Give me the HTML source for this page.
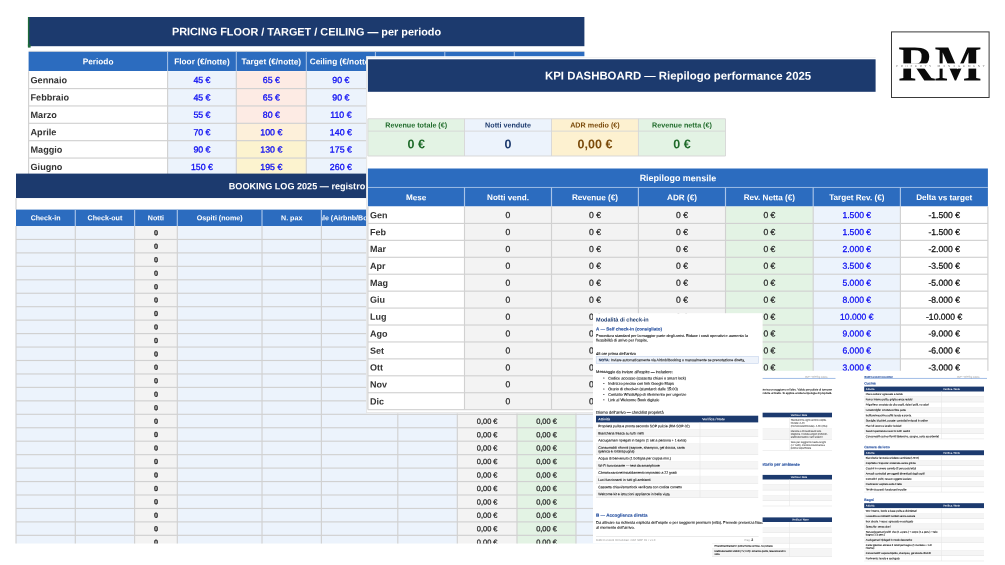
<!DOCTYPE html>
<html lang="it"><head><meta charset="utf-8"><title>R&amp;M Property Management</title>
<style>
html,body{margin:0;padding:0;background:#fff;}
body{width:1005px;height:565px;overflow:hidden;position:relative;}
svg{position:absolute;left:0;top:0;display:block;will-change:transform;filter:blur(0.3px);font-family:"Liberation Sans",sans-serif;}
svg text{white-space:pre;}
.sf{font-family:"Liberation Serif",serif;}
</style></head><body>
<svg width="1005" height="565" viewBox="0 0 1005 565">
<rect x="0" y="0" width="1005" height="565" fill="#fff"/>
<g id="pricing">
<rect x="28.6" y="17" width="555.8" height="29.2" fill="#1c3a6e"/>
<text transform="translate(306.5,35.42) rotate(0.03)" font-size="10.88" text-anchor="middle" font-weight="bold" fill="#fff">PRICING FLOOR / TARGET / CEILING — per periodo</text>
<rect x="27.9" y="17" width="1.4" height="29.4" fill="#1e6b3a"/>
<rect x="27.9" y="44.4" width="2.7" height="3.2" fill="#1e6b3a"/>
<rect x="28.6" y="50.9" width="555.8" height="0.8" fill="#d1d1d1"/>
<rect x="28.6" y="51.8" width="555.8" height="19.2" fill="#2c6cbf"/>
<text transform="translate(98.1,64.37) rotate(0.03)" font-size="8.25" text-anchor="middle" font-weight="bold" fill="#fff">Periodo</text>
<rect x="167.1" y="51.8" width="1" height="19.2" fill="#a9c4e8"/>
<text transform="translate(201.95,64.37) rotate(0.03)" font-size="8.25" text-anchor="middle" font-weight="bold" fill="#fff">Floor (€/notte)</text>
<rect x="235.8" y="51.8" width="1" height="19.2" fill="#a9c4e8"/>
<text transform="translate(271.3,64.37) rotate(0.03)" font-size="8.25" text-anchor="middle" font-weight="bold" fill="#fff">Target (€/notte)</text>
<rect x="305.8" y="51.8" width="1" height="19.2" fill="#a9c4e8"/>
<text transform="translate(340.85,64.37) rotate(0.03)" font-size="8.25" text-anchor="middle" font-weight="bold" fill="#fff">Ceiling (€/notte)</text>
<rect x="374.9" y="51.8" width="1" height="19.2" fill="#a9c4e8"/>
<text transform="translate(410.1,64.37) rotate(0.03)" font-size="8.25" text-anchor="middle" font-weight="bold" fill="#fff">Note</text>
<rect x="444.3" y="51.8" width="1" height="19.2" fill="#a9c4e8"/>
<rect x="513.8" y="51.8" width="1" height="19.2" fill="#a9c4e8"/>
<rect x="167.6" y="71.2" width="68.7" height="104.22" fill="#ecf3fc"/>
<rect x="306.3" y="71.2" width="69.1" height="104.22" fill="#ecf3fc"/>
<rect x="236.3" y="71.2" width="70" height="17.37" fill="#fdebe4"/>
<rect x="236.3" y="88.57" width="70" height="17.37" fill="#fdebe4"/>
<rect x="236.3" y="105.94" width="70" height="17.37" fill="#fdebe4"/>
<rect x="236.3" y="123.31" width="70" height="17.37" fill="#fdf0da"/>
<rect x="236.3" y="140.68" width="70" height="17.37" fill="#fcf3cf"/>
<rect x="236.3" y="158.05" width="70" height="17.37" fill="#fcf3cf"/>
<rect x="28.6" y="88" width="346.8" height="1.15" fill="#d1d1d1"/>
<text transform="translate(30.5,83.18) rotate(0.03)" font-size="9.15" font-weight="bold" fill="#333">Gennaio</text>
<text transform="translate(201.95,83.05) rotate(0.03)" font-size="8.8" text-anchor="middle" fill="#0c0cf2" stroke="#0c0cf2" stroke-width="0.3">45 €</text>
<text transform="translate(271.3,83.05) rotate(0.03)" font-size="8.8" text-anchor="middle" fill="#0c0cf2" stroke="#0c0cf2" stroke-width="0.3">65 €</text>
<text transform="translate(340.85,83.05) rotate(0.03)" font-size="8.8" text-anchor="middle" fill="#0c0cf2" stroke="#0c0cf2" stroke-width="0.3">90 €</text>
<rect x="28.6" y="105.37" width="346.8" height="1.15" fill="#d1d1d1"/>
<text transform="translate(30.5,100.55) rotate(0.03)" font-size="9.15" font-weight="bold" fill="#333">Febbraio</text>
<text transform="translate(201.95,100.42) rotate(0.03)" font-size="8.8" text-anchor="middle" fill="#0c0cf2" stroke="#0c0cf2" stroke-width="0.3">45 €</text>
<text transform="translate(271.3,100.42) rotate(0.03)" font-size="8.8" text-anchor="middle" fill="#0c0cf2" stroke="#0c0cf2" stroke-width="0.3">65 €</text>
<text transform="translate(340.85,100.42) rotate(0.03)" font-size="8.8" text-anchor="middle" fill="#0c0cf2" stroke="#0c0cf2" stroke-width="0.3">90 €</text>
<rect x="28.6" y="122.73" width="346.8" height="1.15" fill="#d1d1d1"/>
<text transform="translate(30.5,117.92) rotate(0.03)" font-size="9.15" font-weight="bold" fill="#333">Marzo</text>
<text transform="translate(201.95,117.79) rotate(0.03)" font-size="8.8" text-anchor="middle" fill="#0c0cf2" stroke="#0c0cf2" stroke-width="0.3">55 €</text>
<text transform="translate(271.3,117.79) rotate(0.03)" font-size="8.8" text-anchor="middle" fill="#0c0cf2" stroke="#0c0cf2" stroke-width="0.3">80 €</text>
<text transform="translate(340.85,117.79) rotate(0.03)" font-size="8.8" text-anchor="middle" fill="#0c0cf2" stroke="#0c0cf2" stroke-width="0.3">110 €</text>
<rect x="28.6" y="140.11" width="346.8" height="1.15" fill="#d1d1d1"/>
<text transform="translate(30.5,135.29) rotate(0.03)" font-size="9.15" font-weight="bold" fill="#333">Aprile</text>
<text transform="translate(201.95,135.16) rotate(0.03)" font-size="8.8" text-anchor="middle" fill="#0c0cf2" stroke="#0c0cf2" stroke-width="0.3">70 €</text>
<text transform="translate(271.3,135.16) rotate(0.03)" font-size="8.8" text-anchor="middle" fill="#0c0cf2" stroke="#0c0cf2" stroke-width="0.3">100 €</text>
<text transform="translate(340.85,135.16) rotate(0.03)" font-size="8.8" text-anchor="middle" fill="#0c0cf2" stroke="#0c0cf2" stroke-width="0.3">140 €</text>
<rect x="28.6" y="157.48" width="346.8" height="1.15" fill="#d1d1d1"/>
<text transform="translate(30.5,152.66) rotate(0.03)" font-size="9.15" font-weight="bold" fill="#333">Maggio</text>
<text transform="translate(201.95,152.53) rotate(0.03)" font-size="8.8" text-anchor="middle" fill="#0c0cf2" stroke="#0c0cf2" stroke-width="0.3">90 €</text>
<text transform="translate(271.3,152.53) rotate(0.03)" font-size="8.8" text-anchor="middle" fill="#0c0cf2" stroke="#0c0cf2" stroke-width="0.3">130 €</text>
<text transform="translate(340.85,152.53) rotate(0.03)" font-size="8.8" text-anchor="middle" fill="#0c0cf2" stroke="#0c0cf2" stroke-width="0.3">175 €</text>
<rect x="28.6" y="174.85" width="346.8" height="1.15" fill="#d1d1d1"/>
<text transform="translate(30.5,170.03) rotate(0.03)" font-size="9.15" font-weight="bold" fill="#333">Giugno</text>
<text transform="translate(201.95,169.9) rotate(0.03)" font-size="8.8" text-anchor="middle" fill="#0c0cf2" stroke="#0c0cf2" stroke-width="0.3">150 €</text>
<text transform="translate(271.3,169.9) rotate(0.03)" font-size="8.8" text-anchor="middle" fill="#0c0cf2" stroke="#0c0cf2" stroke-width="0.3">195 €</text>
<text transform="translate(340.85,169.9) rotate(0.03)" font-size="8.8" text-anchor="middle" fill="#0c0cf2" stroke="#0c0cf2" stroke-width="0.3">260 €</text>
<rect x="28.03" y="71.2" width="1.15" height="104.22" fill="#d1d1d1"/>
<rect x="167.03" y="71.2" width="1.15" height="104.22" fill="#d1d1d1"/>
<rect x="235.73" y="71.2" width="1.15" height="104.22" fill="#d1d1d1"/>
<rect x="305.73" y="71.2" width="1.15" height="104.22" fill="#d1d1d1"/>
<rect x="374.82" y="71.2" width="1.15" height="104.22" fill="#d1d1d1"/>
</g>
<g id="booking">
<rect x="16" y="173.6" width="624" height="24.6" fill="#1c3a6e"/>
<text transform="translate(228.8,189.18) rotate(0.03)" font-size="9.1" font-weight="bold" fill="#fff">BOOKING LOG 2025 — registro prenotazioni</text>
<rect x="16" y="198.2" width="624" height="11.4" fill="#fff"/>
<rect x="15.43" y="198.2" width="1.15" height="11.4" fill="#d1d1d1"/>
<rect x="16" y="209.6" width="624" height="16.4" fill="#2c6cbf"/>
<clipPath id="c1"><rect x="16.5" y="209.6" width="58.3" height="16.4"/></clipPath><g clip-path="url(#c1)">
<text transform="translate(45.65,220.36) rotate(0.03)" font-size="7.1" text-anchor="middle" font-weight="bold" fill="#fff">Check-in</text>
</g>
<rect x="74.72" y="209.6" width="1.15" height="16.4" fill="#a9c4e8"/>
<clipPath id="c2"><rect x="75.8" y="209.6" width="58.3" height="16.4"/></clipPath><g clip-path="url(#c2)">
<text transform="translate(104.95,220.36) rotate(0.03)" font-size="7.1" text-anchor="middle" font-weight="bold" fill="#fff">Check-out</text>
</g>
<rect x="134.03" y="209.6" width="1.15" height="16.4" fill="#a9c4e8"/>
<clipPath id="c3"><rect x="135.1" y="209.6" width="41.7" height="16.4"/></clipPath><g clip-path="url(#c3)">
<text transform="translate(155.95,220.36) rotate(0.03)" font-size="7.1" text-anchor="middle" font-weight="bold" fill="#fff">Notti</text>
</g>
<rect x="176.73" y="209.6" width="1.15" height="16.4" fill="#a9c4e8"/>
<clipPath id="c4"><rect x="177.8" y="209.6" width="83.7" height="16.4"/></clipPath><g clip-path="url(#c4)">
<text transform="translate(219.65,220.36) rotate(0.03)" font-size="7.1" text-anchor="middle" font-weight="bold" fill="#fff">Ospiti (nome)</text>
</g>
<rect x="261.43" y="209.6" width="1.15" height="16.4" fill="#a9c4e8"/>
<clipPath id="c5"><rect x="262.5" y="209.6" width="58.4" height="16.4"/></clipPath><g clip-path="url(#c5)">
<text transform="translate(291.7,220.36) rotate(0.03)" font-size="7.1" text-anchor="middle" font-weight="bold" fill="#fff">N. pax</text>
</g>
<rect x="320.82" y="209.6" width="1.15" height="16.4" fill="#a9c4e8"/>
<clipPath id="c6"><rect x="321.9" y="209.6" width="75.4" height="16.4"/></clipPath><g clip-path="url(#c6)">
<text transform="translate(359.6,220.36) rotate(0.03)" font-size="7.1" text-anchor="middle" font-weight="bold" fill="#fff">Canale (Airbnb/Booking/Diretto)</text>
</g>
<rect x="397.23" y="209.6" width="1.15" height="16.4" fill="#a9c4e8"/>
<clipPath id="c7"><rect x="398.3" y="209.6" width="58.5" height="16.4"/></clipPath><g clip-path="url(#c7)">
<text transform="translate(427.55,220.36) rotate(0.03)" font-size="7.1" text-anchor="middle" font-weight="bold" fill="#fff">Prezzo/notte (€)</text>
</g>
<rect x="456.73" y="209.6" width="1.15" height="16.4" fill="#a9c4e8"/>
<clipPath id="c8"><rect x="457.8" y="209.6" width="58.7" height="16.4"/></clipPath><g clip-path="url(#c8)">
<text transform="translate(487.15,220.36) rotate(0.03)" font-size="7.1" text-anchor="middle" font-weight="bold" fill="#fff">Totale lordo (€)</text>
</g>
<rect x="516.42" y="209.6" width="1.15" height="16.4" fill="#a9c4e8"/>
<clipPath id="c9"><rect x="517.5" y="209.6" width="58" height="16.4"/></clipPath><g clip-path="url(#c9)">
<text transform="translate(546.5,220.36) rotate(0.03)" font-size="7.1" text-anchor="middle" font-weight="bold" fill="#fff">Netto (€)</text>
</g>
<rect x="575.42" y="209.6" width="1.15" height="16.4" fill="#a9c4e8"/>
<clipPath id="c10"><rect x="576.5" y="209.6" width="63" height="16.4"/></clipPath><g clip-path="url(#c10)">
<text transform="translate(608,220.36) rotate(0.03)" font-size="7.1" text-anchor="middle" font-weight="bold" fill="#fff">Note</text>
</g>
<clipPath id="c11"><rect x="0" y="226" width="1005" height="317.6"/></clipPath><g clip-path="url(#c11)">
<rect x="16" y="226" width="59.3" height="319.6" fill="#ecf3fc"/>
<rect x="75.3" y="226" width="59.3" height="319.6" fill="#ecf3fc"/>
<rect x="134.6" y="226" width="42.7" height="319.6" fill="#f3f3f3"/>
<rect x="177.3" y="226" width="84.7" height="319.6" fill="#ecf3fc"/>
<rect x="262" y="226" width="59.4" height="319.6" fill="#ecf3fc"/>
<rect x="321.4" y="226" width="76.4" height="319.6" fill="#ecf3fc"/>
<rect x="397.8" y="226" width="59.5" height="319.6" fill="#ecf3fc"/>
<rect x="457.3" y="226" width="59.7" height="319.6" fill="#f3f3f3"/>
<rect x="517" y="226" width="59" height="319.6" fill="#e3f3e4"/>
<rect x="576" y="226" width="64" height="319.6" fill="#ecf3fc"/>
<rect x="16" y="238.88" width="624" height="1.15" fill="#d1d1d1"/>
<text transform="translate(155.95,235.35) rotate(0.03)" font-size="7.3" text-anchor="middle" font-weight="bold" fill="#1a1a1a" stroke="#1a1a1a" stroke-width="0.2">0</text>
<text transform="translate(487.15,235.41) rotate(0.03)" font-size="7.45" text-anchor="middle" fill="#2a2a2a" stroke="#2a2a2a" stroke-width="0.26">0,00 €</text>
<text transform="translate(546.5,235.41) rotate(0.03)" font-size="7.45" text-anchor="middle" fill="#2a2a2a" stroke="#2a2a2a" stroke-width="0.26">0,00 €</text>
<rect x="16" y="252.32" width="624" height="1.15" fill="#d1d1d1"/>
<text transform="translate(155.95,248.8) rotate(0.03)" font-size="7.3" text-anchor="middle" font-weight="bold" fill="#1a1a1a" stroke="#1a1a1a" stroke-width="0.2">0</text>
<text transform="translate(487.15,248.86) rotate(0.03)" font-size="7.45" text-anchor="middle" fill="#2a2a2a" stroke="#2a2a2a" stroke-width="0.26">0,00 €</text>
<text transform="translate(546.5,248.86) rotate(0.03)" font-size="7.45" text-anchor="middle" fill="#2a2a2a" stroke="#2a2a2a" stroke-width="0.26">0,00 €</text>
<rect x="16" y="265.78" width="624" height="1.15" fill="#d1d1d1"/>
<text transform="translate(155.95,262.25) rotate(0.03)" font-size="7.3" text-anchor="middle" font-weight="bold" fill="#1a1a1a" stroke="#1a1a1a" stroke-width="0.2">0</text>
<text transform="translate(487.15,262.31) rotate(0.03)" font-size="7.45" text-anchor="middle" fill="#2a2a2a" stroke="#2a2a2a" stroke-width="0.26">0,00 €</text>
<text transform="translate(546.5,262.31) rotate(0.03)" font-size="7.45" text-anchor="middle" fill="#2a2a2a" stroke="#2a2a2a" stroke-width="0.26">0,00 €</text>
<rect x="16" y="279.23" width="624" height="1.15" fill="#d1d1d1"/>
<text transform="translate(155.95,275.7) rotate(0.03)" font-size="7.3" text-anchor="middle" font-weight="bold" fill="#1a1a1a" stroke="#1a1a1a" stroke-width="0.2">0</text>
<text transform="translate(487.15,275.76) rotate(0.03)" font-size="7.45" text-anchor="middle" fill="#2a2a2a" stroke="#2a2a2a" stroke-width="0.26">0,00 €</text>
<text transform="translate(546.5,275.76) rotate(0.03)" font-size="7.45" text-anchor="middle" fill="#2a2a2a" stroke="#2a2a2a" stroke-width="0.26">0,00 €</text>
<rect x="16" y="292.68" width="624" height="1.15" fill="#d1d1d1"/>
<text transform="translate(155.95,289.15) rotate(0.03)" font-size="7.3" text-anchor="middle" font-weight="bold" fill="#1a1a1a" stroke="#1a1a1a" stroke-width="0.2">0</text>
<text transform="translate(487.15,289.21) rotate(0.03)" font-size="7.45" text-anchor="middle" fill="#2a2a2a" stroke="#2a2a2a" stroke-width="0.26">0,00 €</text>
<text transform="translate(546.5,289.21) rotate(0.03)" font-size="7.45" text-anchor="middle" fill="#2a2a2a" stroke="#2a2a2a" stroke-width="0.26">0,00 €</text>
<rect x="16" y="306.12" width="624" height="1.15" fill="#d1d1d1"/>
<text transform="translate(155.95,302.6) rotate(0.03)" font-size="7.3" text-anchor="middle" font-weight="bold" fill="#1a1a1a" stroke="#1a1a1a" stroke-width="0.2">0</text>
<text transform="translate(487.15,302.66) rotate(0.03)" font-size="7.45" text-anchor="middle" fill="#2a2a2a" stroke="#2a2a2a" stroke-width="0.26">0,00 €</text>
<text transform="translate(546.5,302.66) rotate(0.03)" font-size="7.45" text-anchor="middle" fill="#2a2a2a" stroke="#2a2a2a" stroke-width="0.26">0,00 €</text>
<rect x="16" y="319.57" width="624" height="1.15" fill="#d1d1d1"/>
<text transform="translate(155.95,316.05) rotate(0.03)" font-size="7.3" text-anchor="middle" font-weight="bold" fill="#1a1a1a" stroke="#1a1a1a" stroke-width="0.2">0</text>
<text transform="translate(487.15,316.11) rotate(0.03)" font-size="7.45" text-anchor="middle" fill="#2a2a2a" stroke="#2a2a2a" stroke-width="0.26">0,00 €</text>
<text transform="translate(546.5,316.11) rotate(0.03)" font-size="7.45" text-anchor="middle" fill="#2a2a2a" stroke="#2a2a2a" stroke-width="0.26">0,00 €</text>
<rect x="16" y="333.02" width="624" height="1.15" fill="#d1d1d1"/>
<text transform="translate(155.95,329.5) rotate(0.03)" font-size="7.3" text-anchor="middle" font-weight="bold" fill="#1a1a1a" stroke="#1a1a1a" stroke-width="0.2">0</text>
<text transform="translate(487.15,329.56) rotate(0.03)" font-size="7.45" text-anchor="middle" fill="#2a2a2a" stroke="#2a2a2a" stroke-width="0.26">0,00 €</text>
<text transform="translate(546.5,329.56) rotate(0.03)" font-size="7.45" text-anchor="middle" fill="#2a2a2a" stroke="#2a2a2a" stroke-width="0.26">0,00 €</text>
<rect x="16" y="346.48" width="624" height="1.15" fill="#d1d1d1"/>
<text transform="translate(155.95,342.95) rotate(0.03)" font-size="7.3" text-anchor="middle" font-weight="bold" fill="#1a1a1a" stroke="#1a1a1a" stroke-width="0.2">0</text>
<text transform="translate(487.15,343.01) rotate(0.03)" font-size="7.45" text-anchor="middle" fill="#2a2a2a" stroke="#2a2a2a" stroke-width="0.26">0,00 €</text>
<text transform="translate(546.5,343.01) rotate(0.03)" font-size="7.45" text-anchor="middle" fill="#2a2a2a" stroke="#2a2a2a" stroke-width="0.26">0,00 €</text>
<rect x="16" y="359.93" width="624" height="1.15" fill="#d1d1d1"/>
<text transform="translate(155.95,356.4) rotate(0.03)" font-size="7.3" text-anchor="middle" font-weight="bold" fill="#1a1a1a" stroke="#1a1a1a" stroke-width="0.2">0</text>
<text transform="translate(487.15,356.46) rotate(0.03)" font-size="7.45" text-anchor="middle" fill="#2a2a2a" stroke="#2a2a2a" stroke-width="0.26">0,00 €</text>
<text transform="translate(546.5,356.46) rotate(0.03)" font-size="7.45" text-anchor="middle" fill="#2a2a2a" stroke="#2a2a2a" stroke-width="0.26">0,00 €</text>
<rect x="16" y="373.38" width="624" height="1.15" fill="#d1d1d1"/>
<text transform="translate(155.95,369.85) rotate(0.03)" font-size="7.3" text-anchor="middle" font-weight="bold" fill="#1a1a1a" stroke="#1a1a1a" stroke-width="0.2">0</text>
<text transform="translate(487.15,369.91) rotate(0.03)" font-size="7.45" text-anchor="middle" fill="#2a2a2a" stroke="#2a2a2a" stroke-width="0.26">0,00 €</text>
<text transform="translate(546.5,369.91) rotate(0.03)" font-size="7.45" text-anchor="middle" fill="#2a2a2a" stroke="#2a2a2a" stroke-width="0.26">0,00 €</text>
<rect x="16" y="386.82" width="624" height="1.15" fill="#d1d1d1"/>
<text transform="translate(155.95,383.3) rotate(0.03)" font-size="7.3" text-anchor="middle" font-weight="bold" fill="#1a1a1a" stroke="#1a1a1a" stroke-width="0.2">0</text>
<text transform="translate(487.15,383.36) rotate(0.03)" font-size="7.45" text-anchor="middle" fill="#2a2a2a" stroke="#2a2a2a" stroke-width="0.26">0,00 €</text>
<text transform="translate(546.5,383.36) rotate(0.03)" font-size="7.45" text-anchor="middle" fill="#2a2a2a" stroke="#2a2a2a" stroke-width="0.26">0,00 €</text>
<rect x="16" y="400.27" width="624" height="1.15" fill="#d1d1d1"/>
<text transform="translate(155.95,396.75) rotate(0.03)" font-size="7.3" text-anchor="middle" font-weight="bold" fill="#1a1a1a" stroke="#1a1a1a" stroke-width="0.2">0</text>
<text transform="translate(487.15,396.81) rotate(0.03)" font-size="7.45" text-anchor="middle" fill="#2a2a2a" stroke="#2a2a2a" stroke-width="0.26">0,00 €</text>
<text transform="translate(546.5,396.81) rotate(0.03)" font-size="7.45" text-anchor="middle" fill="#2a2a2a" stroke="#2a2a2a" stroke-width="0.26">0,00 €</text>
<rect x="16" y="413.73" width="624" height="1.15" fill="#d1d1d1"/>
<text transform="translate(155.95,410.2) rotate(0.03)" font-size="7.3" text-anchor="middle" font-weight="bold" fill="#1a1a1a" stroke="#1a1a1a" stroke-width="0.2">0</text>
<text transform="translate(487.15,410.26) rotate(0.03)" font-size="7.45" text-anchor="middle" fill="#2a2a2a" stroke="#2a2a2a" stroke-width="0.26">0,00 €</text>
<text transform="translate(546.5,410.26) rotate(0.03)" font-size="7.45" text-anchor="middle" fill="#2a2a2a" stroke="#2a2a2a" stroke-width="0.26">0,00 €</text>
<rect x="16" y="427.17" width="624" height="1.15" fill="#d1d1d1"/>
<text transform="translate(155.95,423.65) rotate(0.03)" font-size="7.3" text-anchor="middle" font-weight="bold" fill="#1a1a1a" stroke="#1a1a1a" stroke-width="0.2">0</text>
<text transform="translate(487.15,423.71) rotate(0.03)" font-size="7.45" text-anchor="middle" fill="#2a2a2a" stroke="#2a2a2a" stroke-width="0.26">0,00 €</text>
<text transform="translate(546.5,423.71) rotate(0.03)" font-size="7.45" text-anchor="middle" fill="#2a2a2a" stroke="#2a2a2a" stroke-width="0.26">0,00 €</text>
<rect x="16" y="440.62" width="624" height="1.15" fill="#d1d1d1"/>
<text transform="translate(155.95,437.1) rotate(0.03)" font-size="7.3" text-anchor="middle" font-weight="bold" fill="#1a1a1a" stroke="#1a1a1a" stroke-width="0.2">0</text>
<text transform="translate(487.15,437.16) rotate(0.03)" font-size="7.45" text-anchor="middle" fill="#2a2a2a" stroke="#2a2a2a" stroke-width="0.26">0,00 €</text>
<text transform="translate(546.5,437.16) rotate(0.03)" font-size="7.45" text-anchor="middle" fill="#2a2a2a" stroke="#2a2a2a" stroke-width="0.26">0,00 €</text>
<rect x="16" y="454.07" width="624" height="1.15" fill="#d1d1d1"/>
<text transform="translate(155.95,450.55) rotate(0.03)" font-size="7.3" text-anchor="middle" font-weight="bold" fill="#1a1a1a" stroke="#1a1a1a" stroke-width="0.2">0</text>
<text transform="translate(487.15,450.61) rotate(0.03)" font-size="7.45" text-anchor="middle" fill="#2a2a2a" stroke="#2a2a2a" stroke-width="0.26">0,00 €</text>
<text transform="translate(546.5,450.61) rotate(0.03)" font-size="7.45" text-anchor="middle" fill="#2a2a2a" stroke="#2a2a2a" stroke-width="0.26">0,00 €</text>
<rect x="16" y="467.52" width="624" height="1.15" fill="#d1d1d1"/>
<text transform="translate(155.95,464) rotate(0.03)" font-size="7.3" text-anchor="middle" font-weight="bold" fill="#1a1a1a" stroke="#1a1a1a" stroke-width="0.2">0</text>
<text transform="translate(487.15,464.06) rotate(0.03)" font-size="7.45" text-anchor="middle" fill="#2a2a2a" stroke="#2a2a2a" stroke-width="0.26">0,00 €</text>
<text transform="translate(546.5,464.06) rotate(0.03)" font-size="7.45" text-anchor="middle" fill="#2a2a2a" stroke="#2a2a2a" stroke-width="0.26">0,00 €</text>
<rect x="16" y="480.98" width="624" height="1.15" fill="#d1d1d1"/>
<text transform="translate(155.95,477.45) rotate(0.03)" font-size="7.3" text-anchor="middle" font-weight="bold" fill="#1a1a1a" stroke="#1a1a1a" stroke-width="0.2">0</text>
<text transform="translate(487.15,477.51) rotate(0.03)" font-size="7.45" text-anchor="middle" fill="#2a2a2a" stroke="#2a2a2a" stroke-width="0.26">0,00 €</text>
<text transform="translate(546.5,477.51) rotate(0.03)" font-size="7.45" text-anchor="middle" fill="#2a2a2a" stroke="#2a2a2a" stroke-width="0.26">0,00 €</text>
<rect x="16" y="494.42" width="624" height="1.15" fill="#d1d1d1"/>
<text transform="translate(155.95,490.9) rotate(0.03)" font-size="7.3" text-anchor="middle" font-weight="bold" fill="#1a1a1a" stroke="#1a1a1a" stroke-width="0.2">0</text>
<text transform="translate(487.15,490.96) rotate(0.03)" font-size="7.45" text-anchor="middle" fill="#2a2a2a" stroke="#2a2a2a" stroke-width="0.26">0,00 €</text>
<text transform="translate(546.5,490.96) rotate(0.03)" font-size="7.45" text-anchor="middle" fill="#2a2a2a" stroke="#2a2a2a" stroke-width="0.26">0,00 €</text>
<rect x="16" y="507.88" width="624" height="1.15" fill="#d1d1d1"/>
<text transform="translate(155.95,504.35) rotate(0.03)" font-size="7.3" text-anchor="middle" font-weight="bold" fill="#1a1a1a" stroke="#1a1a1a" stroke-width="0.2">0</text>
<text transform="translate(487.15,504.41) rotate(0.03)" font-size="7.45" text-anchor="middle" fill="#2a2a2a" stroke="#2a2a2a" stroke-width="0.26">0,00 €</text>
<text transform="translate(546.5,504.41) rotate(0.03)" font-size="7.45" text-anchor="middle" fill="#2a2a2a" stroke="#2a2a2a" stroke-width="0.26">0,00 €</text>
<rect x="16" y="521.32" width="624" height="1.15" fill="#d1d1d1"/>
<text transform="translate(155.95,517.8) rotate(0.03)" font-size="7.3" text-anchor="middle" font-weight="bold" fill="#1a1a1a" stroke="#1a1a1a" stroke-width="0.2">0</text>
<text transform="translate(487.15,517.86) rotate(0.03)" font-size="7.45" text-anchor="middle" fill="#2a2a2a" stroke="#2a2a2a" stroke-width="0.26">0,00 €</text>
<text transform="translate(546.5,517.86) rotate(0.03)" font-size="7.45" text-anchor="middle" fill="#2a2a2a" stroke="#2a2a2a" stroke-width="0.26">0,00 €</text>
<rect x="16" y="534.77" width="624" height="1.15" fill="#d1d1d1"/>
<text transform="translate(155.95,531.25) rotate(0.03)" font-size="7.3" text-anchor="middle" font-weight="bold" fill="#1a1a1a" stroke="#1a1a1a" stroke-width="0.2">0</text>
<text transform="translate(487.15,531.31) rotate(0.03)" font-size="7.45" text-anchor="middle" fill="#2a2a2a" stroke="#2a2a2a" stroke-width="0.26">0,00 €</text>
<text transform="translate(546.5,531.31) rotate(0.03)" font-size="7.45" text-anchor="middle" fill="#2a2a2a" stroke="#2a2a2a" stroke-width="0.26">0,00 €</text>
<rect x="16" y="548.22" width="624" height="1.15" fill="#d1d1d1"/>
<text transform="translate(155.95,544.7) rotate(0.03)" font-size="7.3" text-anchor="middle" font-weight="bold" fill="#1a1a1a" stroke="#1a1a1a" stroke-width="0.2">0</text>
<text transform="translate(487.15,544.76) rotate(0.03)" font-size="7.45" text-anchor="middle" fill="#2a2a2a" stroke="#2a2a2a" stroke-width="0.26">0,00 €</text>
<text transform="translate(546.5,544.76) rotate(0.03)" font-size="7.45" text-anchor="middle" fill="#2a2a2a" stroke="#2a2a2a" stroke-width="0.26">0,00 €</text>
<rect x="15.43" y="226" width="1.15" height="319.6" fill="#d1d1d1"/>
<rect x="74.72" y="226" width="1.15" height="319.6" fill="#d1d1d1"/>
<rect x="134.03" y="226" width="1.15" height="319.6" fill="#d1d1d1"/>
<rect x="176.73" y="226" width="1.15" height="319.6" fill="#d1d1d1"/>
<rect x="261.43" y="226" width="1.15" height="319.6" fill="#d1d1d1"/>
<rect x="320.82" y="226" width="1.15" height="319.6" fill="#d1d1d1"/>
<rect x="397.23" y="226" width="1.15" height="319.6" fill="#d1d1d1"/>
<rect x="456.73" y="226" width="1.15" height="319.6" fill="#d1d1d1"/>
<rect x="516.42" y="226" width="1.15" height="319.6" fill="#d1d1d1"/>
<rect x="575.42" y="226" width="1.15" height="319.6" fill="#d1d1d1"/>
</g>
</g>
<g id="kpi">
<rect x="366.3" y="56.2" width="638.7" height="357.1" fill="#fff"/>
<rect x="366.3" y="56.2" width="0.8" height="357.1" fill="#e0e0e0"/>
<rect x="366.3" y="57.3" width="638.7" height="0.7" fill="#ececec"/>
<rect x="366.3" y="412.2" width="638.7" height="1.1" fill="#e4e4e4"/>
<rect x="367.9" y="59.3" width="620" height="32.5" fill="#1c3a6e"/>
<text transform="translate(678.1,79.6) rotate(0.03)" font-size="11.38" text-anchor="middle" font-weight="bold" fill="#fff">KPI DASHBOARD — Riepilogo performance 2025</text>
<rect x="367.9" y="118.8" width="96.6" height="37.2" fill="#e3f3e4"/>
<text transform="translate(416.2,127.54) rotate(0.03)" font-size="7.2" text-anchor="middle" font-weight="bold" fill="#1f6b2a">Revenue totale (€)</text>
<text transform="translate(416.2,148.35) rotate(0.03)" font-size="12.5" text-anchor="middle" font-weight="bold" fill="#1f6b2a">0 €</text>
<rect x="464.5" y="118.8" width="87" height="37.2" fill="#ecf3fc"/>
<text transform="translate(508,127.54) rotate(0.03)" font-size="7.2" text-anchor="middle" font-weight="bold" fill="#1c3a6e">Notti vendute</text>
<text transform="translate(508,148.35) rotate(0.03)" font-size="12.5" text-anchor="middle" font-weight="bold" fill="#1c3a6e">0</text>
<rect x="551.5" y="118.8" width="86.9" height="37.2" fill="#fdf1d0"/>
<text transform="translate(594.95,127.54) rotate(0.03)" font-size="7.2" text-anchor="middle" font-weight="bold" fill="#7a4a0a">ADR medio (€)</text>
<text transform="translate(594.95,148.35) rotate(0.03)" font-size="12.5" text-anchor="middle" font-weight="bold" fill="#7a4a0a">0,00 €</text>
<rect x="638.4" y="118.8" width="87.1" height="37.2" fill="#e3f3e4"/>
<text transform="translate(681.95,127.54) rotate(0.03)" font-size="7.2" text-anchor="middle" font-weight="bold" fill="#1f6b2a">Revenue netta (€)</text>
<text transform="translate(681.95,148.35) rotate(0.03)" font-size="12.5" text-anchor="middle" font-weight="bold" fill="#1f6b2a">0 €</text>
<rect x="367.9" y="118.35" width="357.6" height="0.9" fill="#d6d6d6"/>
<rect x="367.9" y="130.65" width="357.6" height="0.9" fill="#d6d6d6"/>
<rect x="367.9" y="155.55" width="357.6" height="0.9" fill="#d6d6d6"/>
<rect x="367.45" y="118.8" width="0.9" height="37.2" fill="#d6d6d6"/>
<rect x="464.05" y="118.8" width="0.9" height="37.2" fill="#d6d6d6"/>
<rect x="551.05" y="118.8" width="0.9" height="37.2" fill="#d6d6d6"/>
<rect x="637.95" y="118.8" width="0.9" height="37.2" fill="#d6d6d6"/>
<rect x="725.05" y="118.8" width="0.9" height="37.2" fill="#d6d6d6"/>
<rect x="367.9" y="168.5" width="620" height="38" fill="#2c6cbf"/>
<text transform="translate(677.9,181.12) rotate(0.03)" font-size="8.95" text-anchor="middle" font-weight="bold" fill="#fff">Riepilogo mensile</text>
<rect x="367.9" y="186.95" width="620" height="0.9" fill="#a9c4e8"/>
<text transform="translate(416.2,200.13) rotate(0.03)" font-size="8.15" text-anchor="middle" font-weight="bold" fill="#fff">Mese</text>
<rect x="463.93" y="187.4" width="1.15" height="19.1" fill="#a9c4e8"/>
<text transform="translate(508,200.13) rotate(0.03)" font-size="8.15" text-anchor="middle" font-weight="bold" fill="#fff">Notti vend.</text>
<rect x="550.92" y="187.4" width="1.15" height="19.1" fill="#a9c4e8"/>
<text transform="translate(594.95,200.13) rotate(0.03)" font-size="8.15" text-anchor="middle" font-weight="bold" fill="#fff">Revenue (€)</text>
<rect x="637.82" y="187.4" width="1.15" height="19.1" fill="#a9c4e8"/>
<text transform="translate(681.95,200.13) rotate(0.03)" font-size="8.15" text-anchor="middle" font-weight="bold" fill="#fff">ADR (€)</text>
<rect x="724.92" y="187.4" width="1.15" height="19.1" fill="#a9c4e8"/>
<text transform="translate(769.35,200.13) rotate(0.03)" font-size="8.15" text-anchor="middle" font-weight="bold" fill="#fff">Rev. Netta (€)</text>
<rect x="812.62" y="187.4" width="1.15" height="19.1" fill="#a9c4e8"/>
<text transform="translate(856.8,200.13) rotate(0.03)" font-size="8.15" text-anchor="middle" font-weight="bold" fill="#fff">Target Rev. (€)</text>
<rect x="899.82" y="187.4" width="1.15" height="19.1" fill="#a9c4e8"/>
<text transform="translate(944.15,200.13) rotate(0.03)" font-size="8.15" text-anchor="middle" font-weight="bold" fill="#fff">Delta vs target</text>
<rect x="367.9" y="206.5" width="96.6" height="203.16" fill="#fff"/>
<rect x="464.5" y="206.5" width="87" height="203.16" fill="#f3f3f3"/>
<rect x="551.5" y="206.5" width="86.9" height="203.16" fill="#f3f3f3"/>
<rect x="638.4" y="206.5" width="87.1" height="203.16" fill="#f3f3f3"/>
<rect x="725.5" y="206.5" width="87.7" height="203.16" fill="#e3f3e4"/>
<rect x="813.2" y="206.5" width="87.2" height="203.16" fill="#ecf3fc"/>
<rect x="900.4" y="206.5" width="87.5" height="203.16" fill="#fff"/>
<rect x="367.9" y="222.86" width="620" height="1.15" fill="#d1d1d1"/>
<text transform="translate(369.9,218.21) rotate(0.03)" font-size="9" font-weight="bold" fill="#333">Gen</text>
<text transform="translate(508,218.06) rotate(0.03)" font-size="8.6" text-anchor="middle" fill="#2a2a2a" stroke="#2a2a2a" stroke-width="0.26">0</text>
<text transform="translate(594.95,218.06) rotate(0.03)" font-size="8.6" text-anchor="middle" fill="#2a2a2a" stroke="#2a2a2a" stroke-width="0.26">0 €</text>
<text transform="translate(681.95,218.06) rotate(0.03)" font-size="8.6" text-anchor="middle" fill="#2a2a2a" stroke="#2a2a2a" stroke-width="0.26">0 €</text>
<text transform="translate(769.35,218.06) rotate(0.03)" font-size="8.6" text-anchor="middle" fill="#2a2a2a" stroke="#2a2a2a" stroke-width="0.26">0 €</text>
<text transform="translate(856.8,218.06) rotate(0.03)" font-size="8.6" text-anchor="middle" fill="#0c0cf2" stroke="#0c0cf2" stroke-width="0.26">1.500 €</text>
<text transform="translate(944.15,218.06) rotate(0.03)" font-size="8.6" text-anchor="middle" fill="#111" stroke="#111" stroke-width="0.26">-1.500 €</text>
<rect x="367.9" y="239.79" width="620" height="1.15" fill="#d1d1d1"/>
<text transform="translate(369.9,235.14) rotate(0.03)" font-size="9" font-weight="bold" fill="#333">Feb</text>
<text transform="translate(508,234.99) rotate(0.03)" font-size="8.6" text-anchor="middle" fill="#2a2a2a" stroke="#2a2a2a" stroke-width="0.26">0</text>
<text transform="translate(594.95,234.99) rotate(0.03)" font-size="8.6" text-anchor="middle" fill="#2a2a2a" stroke="#2a2a2a" stroke-width="0.26">0 €</text>
<text transform="translate(681.95,234.99) rotate(0.03)" font-size="8.6" text-anchor="middle" fill="#2a2a2a" stroke="#2a2a2a" stroke-width="0.26">0 €</text>
<text transform="translate(769.35,234.99) rotate(0.03)" font-size="8.6" text-anchor="middle" fill="#2a2a2a" stroke="#2a2a2a" stroke-width="0.26">0 €</text>
<text transform="translate(856.8,234.99) rotate(0.03)" font-size="8.6" text-anchor="middle" fill="#0c0cf2" stroke="#0c0cf2" stroke-width="0.26">1.500 €</text>
<text transform="translate(944.15,234.99) rotate(0.03)" font-size="8.6" text-anchor="middle" fill="#111" stroke="#111" stroke-width="0.26">-1.500 €</text>
<rect x="367.9" y="256.72" width="620" height="1.15" fill="#d1d1d1"/>
<text transform="translate(369.9,252.07) rotate(0.03)" font-size="9" font-weight="bold" fill="#333">Mar</text>
<text transform="translate(508,251.92) rotate(0.03)" font-size="8.6" text-anchor="middle" fill="#2a2a2a" stroke="#2a2a2a" stroke-width="0.26">0</text>
<text transform="translate(594.95,251.92) rotate(0.03)" font-size="8.6" text-anchor="middle" fill="#2a2a2a" stroke="#2a2a2a" stroke-width="0.26">0 €</text>
<text transform="translate(681.95,251.92) rotate(0.03)" font-size="8.6" text-anchor="middle" fill="#2a2a2a" stroke="#2a2a2a" stroke-width="0.26">0 €</text>
<text transform="translate(769.35,251.92) rotate(0.03)" font-size="8.6" text-anchor="middle" fill="#2a2a2a" stroke="#2a2a2a" stroke-width="0.26">0 €</text>
<text transform="translate(856.8,251.92) rotate(0.03)" font-size="8.6" text-anchor="middle" fill="#0c0cf2" stroke="#0c0cf2" stroke-width="0.26">2.000 €</text>
<text transform="translate(944.15,251.92) rotate(0.03)" font-size="8.6" text-anchor="middle" fill="#111" stroke="#111" stroke-width="0.26">-2.000 €</text>
<rect x="367.9" y="273.65" width="620" height="1.15" fill="#d1d1d1"/>
<text transform="translate(369.9,269) rotate(0.03)" font-size="9" font-weight="bold" fill="#333">Apr</text>
<text transform="translate(508,268.85) rotate(0.03)" font-size="8.6" text-anchor="middle" fill="#2a2a2a" stroke="#2a2a2a" stroke-width="0.26">0</text>
<text transform="translate(594.95,268.85) rotate(0.03)" font-size="8.6" text-anchor="middle" fill="#2a2a2a" stroke="#2a2a2a" stroke-width="0.26">0 €</text>
<text transform="translate(681.95,268.85) rotate(0.03)" font-size="8.6" text-anchor="middle" fill="#2a2a2a" stroke="#2a2a2a" stroke-width="0.26">0 €</text>
<text transform="translate(769.35,268.85) rotate(0.03)" font-size="8.6" text-anchor="middle" fill="#2a2a2a" stroke="#2a2a2a" stroke-width="0.26">0 €</text>
<text transform="translate(856.8,268.85) rotate(0.03)" font-size="8.6" text-anchor="middle" fill="#0c0cf2" stroke="#0c0cf2" stroke-width="0.26">3.500 €</text>
<text transform="translate(944.15,268.85) rotate(0.03)" font-size="8.6" text-anchor="middle" fill="#111" stroke="#111" stroke-width="0.26">-3.500 €</text>
<rect x="367.9" y="290.58" width="620" height="1.15" fill="#d1d1d1"/>
<text transform="translate(369.9,285.93) rotate(0.03)" font-size="9" font-weight="bold" fill="#333">Mag</text>
<text transform="translate(508,285.78) rotate(0.03)" font-size="8.6" text-anchor="middle" fill="#2a2a2a" stroke="#2a2a2a" stroke-width="0.26">0</text>
<text transform="translate(594.95,285.78) rotate(0.03)" font-size="8.6" text-anchor="middle" fill="#2a2a2a" stroke="#2a2a2a" stroke-width="0.26">0 €</text>
<text transform="translate(681.95,285.78) rotate(0.03)" font-size="8.6" text-anchor="middle" fill="#2a2a2a" stroke="#2a2a2a" stroke-width="0.26">0 €</text>
<text transform="translate(769.35,285.78) rotate(0.03)" font-size="8.6" text-anchor="middle" fill="#2a2a2a" stroke="#2a2a2a" stroke-width="0.26">0 €</text>
<text transform="translate(856.8,285.78) rotate(0.03)" font-size="8.6" text-anchor="middle" fill="#0c0cf2" stroke="#0c0cf2" stroke-width="0.26">5.000 €</text>
<text transform="translate(944.15,285.78) rotate(0.03)" font-size="8.6" text-anchor="middle" fill="#111" stroke="#111" stroke-width="0.26">-5.000 €</text>
<rect x="367.9" y="307.5" width="620" height="1.15" fill="#d1d1d1"/>
<text transform="translate(369.9,302.85) rotate(0.03)" font-size="9" font-weight="bold" fill="#333">Giu</text>
<text transform="translate(508,302.71) rotate(0.03)" font-size="8.6" text-anchor="middle" fill="#2a2a2a" stroke="#2a2a2a" stroke-width="0.26">0</text>
<text transform="translate(594.95,302.71) rotate(0.03)" font-size="8.6" text-anchor="middle" fill="#2a2a2a" stroke="#2a2a2a" stroke-width="0.26">0 €</text>
<text transform="translate(681.95,302.71) rotate(0.03)" font-size="8.6" text-anchor="middle" fill="#2a2a2a" stroke="#2a2a2a" stroke-width="0.26">0 €</text>
<text transform="translate(769.35,302.71) rotate(0.03)" font-size="8.6" text-anchor="middle" fill="#2a2a2a" stroke="#2a2a2a" stroke-width="0.26">0 €</text>
<text transform="translate(856.8,302.71) rotate(0.03)" font-size="8.6" text-anchor="middle" fill="#0c0cf2" stroke="#0c0cf2" stroke-width="0.26">8.000 €</text>
<text transform="translate(944.15,302.71) rotate(0.03)" font-size="8.6" text-anchor="middle" fill="#111" stroke="#111" stroke-width="0.26">-8.000 €</text>
<rect x="367.9" y="324.44" width="620" height="1.15" fill="#d1d1d1"/>
<text transform="translate(369.9,319.78) rotate(0.03)" font-size="9" font-weight="bold" fill="#333">Lug</text>
<text transform="translate(508,319.64) rotate(0.03)" font-size="8.6" text-anchor="middle" fill="#2a2a2a" stroke="#2a2a2a" stroke-width="0.26">0</text>
<text transform="translate(594.95,319.64) rotate(0.03)" font-size="8.6" text-anchor="middle" fill="#2a2a2a" stroke="#2a2a2a" stroke-width="0.26">0 €</text>
<text transform="translate(681.95,319.64) rotate(0.03)" font-size="8.6" text-anchor="middle" fill="#2a2a2a" stroke="#2a2a2a" stroke-width="0.26">0 €</text>
<text transform="translate(769.35,319.64) rotate(0.03)" font-size="8.6" text-anchor="middle" fill="#2a2a2a" stroke="#2a2a2a" stroke-width="0.26">0 €</text>
<text transform="translate(856.8,319.64) rotate(0.03)" font-size="8.6" text-anchor="middle" fill="#0c0cf2" stroke="#0c0cf2" stroke-width="0.26">10.000 €</text>
<text transform="translate(944.15,319.64) rotate(0.03)" font-size="8.6" text-anchor="middle" fill="#111" stroke="#111" stroke-width="0.26">-10.000 €</text>
<rect x="367.9" y="341.37" width="620" height="1.15" fill="#d1d1d1"/>
<text transform="translate(369.9,336.71) rotate(0.03)" font-size="9" font-weight="bold" fill="#333">Ago</text>
<text transform="translate(508,336.57) rotate(0.03)" font-size="8.6" text-anchor="middle" fill="#2a2a2a" stroke="#2a2a2a" stroke-width="0.26">0</text>
<text transform="translate(594.95,336.57) rotate(0.03)" font-size="8.6" text-anchor="middle" fill="#2a2a2a" stroke="#2a2a2a" stroke-width="0.26">0 €</text>
<text transform="translate(681.95,336.57) rotate(0.03)" font-size="8.6" text-anchor="middle" fill="#2a2a2a" stroke="#2a2a2a" stroke-width="0.26">0 €</text>
<text transform="translate(769.35,336.57) rotate(0.03)" font-size="8.6" text-anchor="middle" fill="#2a2a2a" stroke="#2a2a2a" stroke-width="0.26">0 €</text>
<text transform="translate(856.8,336.57) rotate(0.03)" font-size="8.6" text-anchor="middle" fill="#0c0cf2" stroke="#0c0cf2" stroke-width="0.26">9.000 €</text>
<text transform="translate(944.15,336.57) rotate(0.03)" font-size="8.6" text-anchor="middle" fill="#111" stroke="#111" stroke-width="0.26">-9.000 €</text>
<rect x="367.9" y="358.3" width="620" height="1.15" fill="#d1d1d1"/>
<text transform="translate(369.9,353.64) rotate(0.03)" font-size="9" font-weight="bold" fill="#333">Set</text>
<text transform="translate(508,353.5) rotate(0.03)" font-size="8.6" text-anchor="middle" fill="#2a2a2a" stroke="#2a2a2a" stroke-width="0.26">0</text>
<text transform="translate(594.95,353.5) rotate(0.03)" font-size="8.6" text-anchor="middle" fill="#2a2a2a" stroke="#2a2a2a" stroke-width="0.26">0 €</text>
<text transform="translate(681.95,353.5) rotate(0.03)" font-size="8.6" text-anchor="middle" fill="#2a2a2a" stroke="#2a2a2a" stroke-width="0.26">0 €</text>
<text transform="translate(769.35,353.5) rotate(0.03)" font-size="8.6" text-anchor="middle" fill="#2a2a2a" stroke="#2a2a2a" stroke-width="0.26">0 €</text>
<text transform="translate(856.8,353.5) rotate(0.03)" font-size="8.6" text-anchor="middle" fill="#0c0cf2" stroke="#0c0cf2" stroke-width="0.26">6.000 €</text>
<text transform="translate(944.15,353.5) rotate(0.03)" font-size="8.6" text-anchor="middle" fill="#111" stroke="#111" stroke-width="0.26">-6.000 €</text>
<rect x="367.9" y="375.23" width="620" height="1.15" fill="#d1d1d1"/>
<text transform="translate(369.9,370.57) rotate(0.03)" font-size="9" font-weight="bold" fill="#333">Ott</text>
<text transform="translate(508,370.43) rotate(0.03)" font-size="8.6" text-anchor="middle" fill="#2a2a2a" stroke="#2a2a2a" stroke-width="0.26">0</text>
<text transform="translate(594.95,370.43) rotate(0.03)" font-size="8.6" text-anchor="middle" fill="#2a2a2a" stroke="#2a2a2a" stroke-width="0.26">0 €</text>
<text transform="translate(681.95,370.43) rotate(0.03)" font-size="8.6" text-anchor="middle" fill="#2a2a2a" stroke="#2a2a2a" stroke-width="0.26">0 €</text>
<text transform="translate(769.35,370.43) rotate(0.03)" font-size="8.6" text-anchor="middle" fill="#2a2a2a" stroke="#2a2a2a" stroke-width="0.26">0 €</text>
<text transform="translate(856.8,370.43) rotate(0.03)" font-size="8.6" text-anchor="middle" fill="#0c0cf2" stroke="#0c0cf2" stroke-width="0.26">3.000 €</text>
<text transform="translate(944.15,370.43) rotate(0.03)" font-size="8.6" text-anchor="middle" fill="#111" stroke="#111" stroke-width="0.26">-3.000 €</text>
<rect x="367.9" y="392.16" width="620" height="1.15" fill="#d1d1d1"/>
<text transform="translate(369.9,387.5) rotate(0.03)" font-size="9" font-weight="bold" fill="#333">Nov</text>
<text transform="translate(508,387.36) rotate(0.03)" font-size="8.6" text-anchor="middle" fill="#2a2a2a" stroke="#2a2a2a" stroke-width="0.26">0</text>
<text transform="translate(594.95,387.36) rotate(0.03)" font-size="8.6" text-anchor="middle" fill="#2a2a2a" stroke="#2a2a2a" stroke-width="0.26">0 €</text>
<text transform="translate(681.95,387.36) rotate(0.03)" font-size="8.6" text-anchor="middle" fill="#2a2a2a" stroke="#2a2a2a" stroke-width="0.26">0 €</text>
<text transform="translate(769.35,387.36) rotate(0.03)" font-size="8.6" text-anchor="middle" fill="#2a2a2a" stroke="#2a2a2a" stroke-width="0.26">0 €</text>
<text transform="translate(856.8,387.36) rotate(0.03)" font-size="8.6" text-anchor="middle" fill="#0c0cf2" stroke="#0c0cf2" stroke-width="0.26">1.500 €</text>
<text transform="translate(944.15,387.36) rotate(0.03)" font-size="8.6" text-anchor="middle" fill="#111" stroke="#111" stroke-width="0.26">-1.500 €</text>
<rect x="367.9" y="409.09" width="620" height="1.15" fill="#d1d1d1"/>
<text transform="translate(369.9,404.44) rotate(0.03)" font-size="9" font-weight="bold" fill="#333">Dic</text>
<text transform="translate(508,404.29) rotate(0.03)" font-size="8.6" text-anchor="middle" fill="#2a2a2a" stroke="#2a2a2a" stroke-width="0.26">0</text>
<text transform="translate(594.95,404.29) rotate(0.03)" font-size="8.6" text-anchor="middle" fill="#2a2a2a" stroke="#2a2a2a" stroke-width="0.26">0 €</text>
<text transform="translate(681.95,404.29) rotate(0.03)" font-size="8.6" text-anchor="middle" fill="#2a2a2a" stroke="#2a2a2a" stroke-width="0.26">0 €</text>
<text transform="translate(769.35,404.29) rotate(0.03)" font-size="8.6" text-anchor="middle" fill="#2a2a2a" stroke="#2a2a2a" stroke-width="0.26">0 €</text>
<text transform="translate(856.8,404.29) rotate(0.03)" font-size="8.6" text-anchor="middle" fill="#0c0cf2" stroke="#0c0cf2" stroke-width="0.26">2.000 €</text>
<text transform="translate(944.15,404.29) rotate(0.03)" font-size="8.6" text-anchor="middle" fill="#111" stroke="#111" stroke-width="0.26">-2.000 €</text>
<rect x="367.32" y="206.5" width="1.15" height="203.16" fill="#d1d1d1"/>
<rect x="463.93" y="206.5" width="1.15" height="203.16" fill="#d1d1d1"/>
<rect x="550.92" y="206.5" width="1.15" height="203.16" fill="#d1d1d1"/>
<rect x="637.82" y="206.5" width="1.15" height="203.16" fill="#d1d1d1"/>
<rect x="724.92" y="206.5" width="1.15" height="203.16" fill="#d1d1d1"/>
<rect x="812.62" y="206.5" width="1.15" height="203.16" fill="#d1d1d1"/>
<rect x="899.82" y="206.5" width="1.15" height="203.16" fill="#d1d1d1"/>
<rect x="987.32" y="206.5" width="1.15" height="203.16" fill="#d1d1d1"/>
</g>
<g id="logo">
<rect x="875.6" y="0" width="129.4" height="116" fill="#fff"/>
<rect x="891.5" y="31.9" width="97.6" height="65.6" fill="#fff" stroke="#3a3a3a" stroke-width="1"/>
<text class="sf" transform="translate(940.1,80.4) rotate(0.03)" font-size="50.5" font-weight="bold" text-anchor="middle" fill="#0a0a0a" textLength="83.6" lengthAdjust="spacingAndGlyphs">RM</text>
<rect x="895.5" y="63.4" width="90.5" height="5.2" fill="#fff"/>
<text class="sf" transform="translate(940.5,67.1) rotate(0.03)" font-size="3.1" text-anchor="middle" fill="#555" textLength="88.5" lengthAdjust="spacing">PROPERTY MANAGEMENT</text>
</g>
<g id="docs23">
<rect x="700" y="370.8" width="305" height="194.2" fill="#fff"/>
<rect x="700" y="377.95" width="135.5" height="0.7" fill="#7aa2dc"/>
<text transform="translate(827.5,377.63) rotate(0.03)" font-size="2.3" text-anchor="end" fill="#888">SOP – Briefing Pulizie</text>
<text transform="translate(832,390.59) rotate(0.03)" font-size="2.75" text-anchor="end" fill="#222" stroke="#222" stroke-width="0.1">Procedura di pulizia standard da eseguire tra un soggiorno e l'altro. Valido per pulizie di turnover</text>
<text transform="translate(832,393.99) rotate(0.03)" font-size="2.75" text-anchor="end" fill="#222" stroke="#222" stroke-width="0.1">ordinario e profonde, per ricondurre al livello. Si applica a tutte le tipologie di proprietà.</text>
<rect x="712" y="412.7" width="120" height="4.6" fill="#1c3a6e"/>
<text transform="translate(713.2,415.9) rotate(0.03)" font-size="2.5" font-weight="bold" fill="#fff">Tipo</text>
<text transform="translate(790.7,415.9) rotate(0.03)" font-size="2.5" font-weight="bold" fill="#fff">Verifica / Note</text>
<rect x="712" y="428.15" width="120" height="0.5" fill="#e0e0e0"/>
<rect x="789.25" y="417.3" width="0.5" height="11.1" fill="#e4e4e4"/>
<text transform="translate(713.2,423.75) rotate(0.03)" font-size="2.5" fill="#1a1a1a" stroke="#1a1a1a" stroke-width="0.1">Pulizia standard</text>
<text transform="translate(790.7,420.85) rotate(0.03)" font-size="2.5" fill="#666" stroke="#666" stroke-width="0.1">Standard tra ogni cambio ospite.</text>
<text transform="translate(790.7,423.75) rotate(0.03)" font-size="2.5" fill="#666" stroke="#666" stroke-width="0.1">Durata: 2-4h</text>
<text transform="translate(790.7,426.65) rotate(0.03)" font-size="2.5" fill="#666" stroke="#666" stroke-width="0.1">(monolocale/bilocale), 4-6h (villa)</text>
<rect x="712" y="428.4" width="120" height="11.1" fill="#f5f5f5"/>
<rect x="712" y="439.25" width="120" height="0.5" fill="#e0e0e0"/>
<rect x="789.25" y="428.4" width="0.5" height="11.1" fill="#e4e4e4"/>
<text transform="translate(713.2,434.85) rotate(0.03)" font-size="2.5" fill="#1a1a1a" stroke="#1a1a1a" stroke-width="0.1">Pulizia profonda</text>
<text transform="translate(790.7,431.95) rotate(0.03)" font-size="2.5" fill="#666" stroke="#666" stroke-width="0.1">Mensile o trimestrale/di alta</text>
<text transform="translate(790.7,434.85) rotate(0.03)" font-size="2.5" fill="#666" stroke="#666" stroke-width="0.1">stagione. Include angoli profondi,</text>
<text transform="translate(790.7,437.75) rotate(0.03)" font-size="2.5" fill="#666" stroke="#666" stroke-width="0.1">elettrodomestici, vetri esterni</text>
<rect x="712" y="450.35" width="120" height="0.5" fill="#e0e0e0"/>
<rect x="789.25" y="439.5" width="0.5" height="11.1" fill="#e4e4e4"/>
<text transform="translate(713.2,445.95) rotate(0.03)" font-size="2.5" fill="#1a1a1a" stroke="#1a1a1a" stroke-width="0.1">Pulizia intermedia</text>
<text transform="translate(790.7,443.05) rotate(0.03)" font-size="2.5" fill="#666" stroke="#666" stroke-width="0.1">Solo per soggiorni medio-lunghi</text>
<text transform="translate(790.7,445.95) rotate(0.03)" font-size="2.5" fill="#666" stroke="#666" stroke-width="0.1">(&gt;7 notti). Cambio biancheria e</text>
<text transform="translate(790.7,448.85) rotate(0.03)" font-size="2.5" fill="#666" stroke="#666" stroke-width="0.1">pulizia superficiale</text>
<text transform="translate(799.7,465.88) rotate(0.03)" font-size="4.1" text-anchor="end" font-weight="bold" fill="#1f4a9c" stroke="#1f4a9c" stroke-width="0.1">Checklist — Inventario per ambiente</text>
<rect x="712" y="474.9" width="120" height="4.6" fill="#1c3a6e"/>
<text transform="translate(713.2,478.1) rotate(0.03)" font-size="2.5" font-weight="bold" fill="#fff">Attività</text>
<text transform="translate(790.7,478.1) rotate(0.03)" font-size="2.5" font-weight="bold" fill="#fff">Verifica / Note</text>
<rect x="712" y="484.55" width="120" height="0.5" fill="#e0e0e0"/>
<rect x="789.25" y="479.5" width="0.5" height="5.3" fill="#e4e4e4"/>
<text transform="translate(713.2,483.05) rotate(0.03)" font-size="2.5" fill="#1a1a1a" stroke="#1a1a1a" stroke-width="0.1">Soggiorno</text>
<rect x="712" y="484.8" width="120" height="5.3" fill="#f5f5f5"/>
<rect x="712" y="489.85" width="120" height="0.5" fill="#e0e0e0"/>
<rect x="789.25" y="484.8" width="0.5" height="5.3" fill="#e4e4e4"/>
<text transform="translate(713.2,488.35) rotate(0.03)" font-size="2.5" fill="#1a1a1a" stroke="#1a1a1a" stroke-width="0.1">Pavimenti aspirati e lavati</text>
<rect x="712" y="495.15" width="120" height="0.5" fill="#e0e0e0"/>
<rect x="789.25" y="490.1" width="0.5" height="5.3" fill="#e4e4e4"/>
<text transform="translate(713.2,493.65) rotate(0.03)" font-size="2.5" fill="#1a1a1a" stroke="#1a1a1a" stroke-width="0.1">Superfici spolverate</text>
<rect x="712" y="495.4" width="120" height="5.3" fill="#f5f5f5"/>
<rect x="712" y="500.45" width="120" height="0.5" fill="#e0e0e0"/>
<rect x="789.25" y="495.4" width="0.5" height="5.3" fill="#e4e4e4"/>
<text transform="translate(713.2,498.95) rotate(0.03)" font-size="2.5" fill="#1a1a1a" stroke="#1a1a1a" stroke-width="0.1">Divano: cuscini sistemati</text>
<rect x="712" y="505.75" width="120" height="0.5" fill="#e0e0e0"/>
<rect x="789.25" y="500.7" width="0.5" height="5.3" fill="#e4e4e4"/>
<text transform="translate(713.2,504.25) rotate(0.03)" font-size="2.5" fill="#1a1a1a" stroke="#1a1a1a" stroke-width="0.1">Finestre e davanzali: puliti, no aloni</text>
<rect x="712" y="517.4" width="120" height="4.6" fill="#1c3a6e"/>
<text transform="translate(714.5,520.6) rotate(0.03)" font-size="2.5" font-weight="bold" fill="#fff">Attività</text>
<text transform="translate(792,520.6) rotate(0.03)" font-size="2.5" font-weight="bold" fill="#fff">Verifica / Note</text>
<rect x="712" y="527.05" width="120" height="0.5" fill="#e0e0e0"/>
<rect x="789.25" y="522" width="0.5" height="5.3" fill="#e4e4e4"/>
<text transform="translate(714.5,525.55) rotate(0.03)" font-size="2.5" fill="#1a1a1a" stroke="#1a1a1a" stroke-width="0.1">Tappeti: aspirati, senza macchie</text>
<rect x="712" y="527.3" width="120" height="5.3" fill="#f5f5f5"/>
<rect x="712" y="532.35" width="120" height="0.5" fill="#e0e0e0"/>
<rect x="789.25" y="527.3" width="0.5" height="5.3" fill="#e4e4e4"/>
<text transform="translate(714.5,530.85) rotate(0.03)" font-size="2.5" fill="#1a1a1a" stroke="#1a1a1a" stroke-width="0.1">Mensole e ripiani: no polvere</text>
<rect x="712" y="537.65" width="120" height="0.5" fill="#e0e0e0"/>
<rect x="789.25" y="532.6" width="0.5" height="5.3" fill="#e4e4e4"/>
<text transform="translate(714.5,536.15) rotate(0.03)" font-size="2.5" fill="#1a1a1a" stroke="#1a1a1a" stroke-width="0.1">Lampade e interruttori: puliti</text>
<rect x="712" y="537.9" width="120" height="5.3" fill="#f5f5f5"/>
<rect x="712" y="542.95" width="120" height="0.5" fill="#e0e0e0"/>
<rect x="789.25" y="537.9" width="0.5" height="5.3" fill="#e4e4e4"/>
<text transform="translate(714.5,541.45) rotate(0.03)" font-size="2.5" fill="#1a1a1a" stroke="#1a1a1a" stroke-width="0.1">Cestini svuotati</text>
<rect x="712" y="548.25" width="120" height="0.5" fill="#e0e0e0"/>
<rect x="789.25" y="543.2" width="0.5" height="5.3" fill="#e4e4e4"/>
<text transform="translate(714.5,546.75) rotate(0.03)" font-size="2.5" fill="#1a1a1a" stroke="#1a1a1a" stroke-width="0.1">Rivestimenti/esterni: pulire fronte cornice, no polvere</text>
<rect x="712" y="548.5" width="120" height="8.2" fill="#f5f5f5"/>
<rect x="712" y="556.45" width="120" height="0.5" fill="#e0e0e0"/>
<rect x="789.25" y="548.5" width="0.5" height="8.2" fill="#e4e4e4"/>
<text transform="translate(714.5,552.05) rotate(0.03)" font-size="2.5" fill="#1a1a1a" stroke="#1a1a1a" stroke-width="0.1">Elettrodomestici visibili (TV, hi-fi): schermo pulito, telecomandi in</text>
<text transform="translate(714.5,554.95) rotate(0.03)" font-size="2.5" fill="#1a1a1a" stroke="#1a1a1a" stroke-width="0.1">vista</text>
<rect x="864.2" y="377.95" width="122.8" height="0.7" fill="#7aa2dc"/>
<text transform="translate(864.6,377.63) rotate(0.03)" font-size="2.3" font-weight="bold" fill="#1f4a9c" stroke="#1f4a9c" stroke-width="0.1">R&amp;M Condotti Immobiliari</text>
<text transform="translate(979.5,377.63) rotate(0.03)" font-size="2.3" text-anchor="end" fill="#888">SOP – Briefing Pulizie</text>
<text transform="translate(864.3,384.42) rotate(0.03)" font-size="3.4" font-weight="bold" fill="#1f4a9c" stroke="#1f4a9c" stroke-width="0.1">Cucina</text>
<rect x="864.2" y="386.6" width="119.8" height="4.9" fill="#1c3a6e"/>
<text transform="translate(865.8,389.97) rotate(0.03)" font-size="2.55" font-weight="bold" fill="#fff">Attività</text>
<text transform="translate(943.1,389.97) rotate(0.03)" font-size="2.55" font-weight="bold" fill="#fff">Verifica / Note</text>
<rect x="864.2" y="396.52" width="119.8" height="0.5" fill="#e0e0e0"/>
<rect x="941.25" y="391.5" width="0.5" height="5.27" fill="#e4e4e4"/>
<text transform="translate(865.8,395.05) rotate(0.03)" font-size="2.55" fill="#1a1a1a" stroke="#1a1a1a" stroke-width="0.1">Piano cottura: sgrassato e lucido</text>
<rect x="864.2" y="396.77" width="119.8" height="5.27" fill="#f5f5f5"/>
<rect x="864.2" y="401.79" width="119.8" height="0.5" fill="#e0e0e0"/>
<rect x="941.25" y="396.77" width="0.5" height="5.27" fill="#e4e4e4"/>
<text transform="translate(865.8,400.32) rotate(0.03)" font-size="2.55" fill="#1a1a1a" stroke="#1a1a1a" stroke-width="0.1">Forno: interno pulito, griglia senza residui</text>
<rect x="864.2" y="407.06" width="119.8" height="0.5" fill="#e0e0e0"/>
<rect x="941.25" y="402.04" width="0.5" height="5.27" fill="#e4e4e4"/>
<text transform="translate(865.8,405.59) rotate(0.03)" font-size="2.55" fill="#1a1a1a" stroke="#1a1a1a" stroke-width="0.1">Frigorifero: svuotato da cibo ospiti, ripiani puliti, no odori</text>
<rect x="864.2" y="407.31" width="119.8" height="5.27" fill="#f5f5f5"/>
<rect x="864.2" y="412.33" width="119.8" height="0.5" fill="#e0e0e0"/>
<rect x="941.25" y="407.31" width="0.5" height="5.27" fill="#e4e4e4"/>
<text transform="translate(865.8,410.86) rotate(0.03)" font-size="2.55" fill="#1a1a1a" stroke="#1a1a1a" stroke-width="0.1">Lavastoviglie: svuotata e filtro pulito</text>
<rect x="864.2" y="417.6" width="119.8" height="0.5" fill="#e0e0e0"/>
<rect x="941.25" y="412.58" width="0.5" height="5.27" fill="#e4e4e4"/>
<text transform="translate(865.8,416.13) rotate(0.03)" font-size="2.55" fill="#1a1a1a" stroke="#1a1a1a" stroke-width="0.1">Bollitore/macchina caffè: lavata e pronta</text>
<rect x="864.2" y="417.85" width="119.8" height="5.27" fill="#f5f5f5"/>
<rect x="864.2" y="422.87" width="119.8" height="0.5" fill="#e0e0e0"/>
<rect x="941.25" y="417.85" width="0.5" height="5.27" fill="#e4e4e4"/>
<text transform="translate(865.8,421.4) rotate(0.03)" font-size="2.55" fill="#1a1a1a" stroke="#1a1a1a" stroke-width="0.1">Stoviglie, bicchieri, posate: controllati e riposti in ordine</text>
<rect x="864.2" y="428.14" width="119.8" height="0.5" fill="#e0e0e0"/>
<rect x="941.25" y="423.12" width="0.5" height="5.27" fill="#e4e4e4"/>
<text transform="translate(865.8,426.67) rotate(0.03)" font-size="2.55" fill="#1a1a1a" stroke="#1a1a1a" stroke-width="0.1">Piani di lavoro e lavello: lucidati</text>
<rect x="864.2" y="428.39" width="119.8" height="5.27" fill="#f5f5f5"/>
<rect x="864.2" y="433.41" width="119.8" height="0.5" fill="#e0e0e0"/>
<rect x="941.25" y="428.39" width="0.5" height="5.27" fill="#e4e4e4"/>
<text transform="translate(865.8,431.94) rotate(0.03)" font-size="2.55" fill="#1a1a1a" stroke="#1a1a1a" stroke-width="0.1">Sacchi spazzatura nuovi in tutti i cestini</text>
<rect x="864.2" y="438.68" width="119.8" height="0.5" fill="#e0e0e0"/>
<rect x="941.25" y="433.66" width="0.5" height="5.27" fill="#e4e4e4"/>
<text transform="translate(865.8,437.21) rotate(0.03)" font-size="2.55" fill="#1a1a1a" stroke="#1a1a1a" stroke-width="0.1">Consumabili cucina riforniti (detersivo, spugna, carta assorbente)</text>
<text transform="translate(864.3,448.22) rotate(0.03)" font-size="3.4" font-weight="bold" fill="#1f4a9c" stroke="#1f4a9c" stroke-width="0.1">Camera da letto</text>
<rect x="864.2" y="450.3" width="119.8" height="4.9" fill="#1c3a6e"/>
<text transform="translate(865.8,453.67) rotate(0.03)" font-size="2.55" font-weight="bold" fill="#fff">Attività</text>
<text transform="translate(943.1,453.67) rotate(0.03)" font-size="2.55" font-weight="bold" fill="#fff">Verifica / Note</text>
<rect x="864.2" y="460.22" width="119.8" height="0.5" fill="#e0e0e0"/>
<rect x="941.25" y="455.2" width="0.5" height="5.27" fill="#e4e4e4"/>
<text transform="translate(865.8,458.75) rotate(0.03)" font-size="2.55" fill="#1a1a1a" stroke="#1a1a1a" stroke-width="0.1">Biancheria: lenzuola e federe cambiate (LISTA)</text>
<rect x="864.2" y="460.47" width="119.8" height="5.27" fill="#f5f5f5"/>
<rect x="864.2" y="465.49" width="119.8" height="0.5" fill="#e0e0e0"/>
<rect x="941.25" y="460.47" width="0.5" height="5.27" fill="#e4e4e4"/>
<text transform="translate(865.8,464.02) rotate(0.03)" font-size="2.55" fill="#1a1a1a" stroke="#1a1a1a" stroke-width="0.1">Copriletto / trapunta: sistemata senza grinze</text>
<rect x="864.2" y="470.76" width="119.8" height="0.5" fill="#e0e0e0"/>
<rect x="941.25" y="465.74" width="0.5" height="5.27" fill="#e4e4e4"/>
<text transform="translate(865.8,469.29) rotate(0.03)" font-size="2.55" fill="#1a1a1a" stroke="#1a1a1a" stroke-width="0.1">Cuscini in numero corretto (2 per posto letto)</text>
<rect x="864.2" y="471.01" width="119.8" height="5.27" fill="#f5f5f5"/>
<rect x="864.2" y="476.03" width="119.8" height="0.5" fill="#e0e0e0"/>
<rect x="941.25" y="471.01" width="0.5" height="5.27" fill="#e4e4e4"/>
<text transform="translate(865.8,474.56) rotate(0.03)" font-size="2.55" fill="#1a1a1a" stroke="#1a1a1a" stroke-width="0.1">Armadi: controllati per oggetti dimenticati dagli ospiti</text>
<rect x="864.2" y="481.3" width="119.8" height="0.5" fill="#e0e0e0"/>
<rect x="941.25" y="476.28" width="0.5" height="5.27" fill="#e4e4e4"/>
<text transform="translate(865.8,479.83) rotate(0.03)" font-size="2.55" fill="#1a1a1a" stroke="#1a1a1a" stroke-width="0.1">Comodini: puliti, nessun oggetto lasciato</text>
<rect x="864.2" y="481.55" width="119.8" height="5.27" fill="#f5f5f5"/>
<rect x="864.2" y="486.57" width="119.8" height="0.5" fill="#e0e0e0"/>
<rect x="941.25" y="481.55" width="0.5" height="5.27" fill="#e4e4e4"/>
<text transform="translate(865.8,485.1) rotate(0.03)" font-size="2.55" fill="#1a1a1a" stroke="#1a1a1a" stroke-width="0.1">Pavimento: aspirato sotto il letto</text>
<rect x="864.2" y="491.84" width="119.8" height="0.5" fill="#e0e0e0"/>
<rect x="941.25" y="486.82" width="0.5" height="5.27" fill="#e4e4e4"/>
<text transform="translate(865.8,490.37) rotate(0.03)" font-size="2.55" fill="#1a1a1a" stroke="#1a1a1a" stroke-width="0.1">Tende oscuranti: funzionanti e pulite</text>
<text transform="translate(864.3,500.92) rotate(0.03)" font-size="3.4" font-weight="bold" fill="#1f4a9c" stroke="#1f4a9c" stroke-width="0.1">Bagni</text>
<rect x="864.2" y="503.2" width="119.8" height="4.9" fill="#1c3a6e"/>
<text transform="translate(865.8,506.57) rotate(0.03)" font-size="2.55" font-weight="bold" fill="#fff">Attività</text>
<text transform="translate(943.1,506.57) rotate(0.03)" font-size="2.55" font-weight="bold" fill="#fff">Verifica / Note</text>
<rect x="864.2" y="513.12" width="119.8" height="0.5" fill="#e0e0e0"/>
<rect x="941.25" y="508.1" width="0.5" height="5.27" fill="#e4e4e4"/>
<text transform="translate(865.8,511.65) rotate(0.03)" font-size="2.55" fill="#1a1a1a" stroke="#1a1a1a" stroke-width="0.1">WC: interno, bordo e base pulita e disinfettati</text>
<rect x="864.2" y="513.37" width="119.8" height="5.27" fill="#f5f5f5"/>
<rect x="864.2" y="518.39" width="119.8" height="0.5" fill="#e0e0e0"/>
<rect x="941.25" y="513.37" width="0.5" height="5.27" fill="#e4e4e4"/>
<text transform="translate(865.8,516.92) rotate(0.03)" font-size="2.55" fill="#1a1a1a" stroke="#1a1a1a" stroke-width="0.1">Lavandino e rubinetti: lucidati senza calcare</text>
<rect x="864.2" y="523.66" width="119.8" height="0.5" fill="#e0e0e0"/>
<rect x="941.25" y="518.64" width="0.5" height="5.27" fill="#e4e4e4"/>
<text transform="translate(865.8,522.19) rotate(0.03)" font-size="2.55" fill="#1a1a1a" stroke="#1a1a1a" stroke-width="0.1">Box doccia / vasca: sgrassato e asciugato</text>
<rect x="864.2" y="523.91" width="119.8" height="5.27" fill="#f5f5f5"/>
<rect x="864.2" y="528.93" width="119.8" height="0.5" fill="#e0e0e0"/>
<rect x="941.25" y="523.91" width="0.5" height="5.27" fill="#e4e4e4"/>
<text transform="translate(865.8,527.46) rotate(0.03)" font-size="2.55" fill="#1a1a1a" stroke="#1a1a1a" stroke-width="0.1">Specchio: senza aloni</text>
<rect x="864.2" y="536.93" width="119.8" height="0.5" fill="#e0e0e0"/>
<rect x="941.25" y="529.18" width="0.5" height="8" fill="#e4e4e4"/>
<text transform="translate(865.8,532.8) rotate(0.03)" font-size="2.55" fill="#1a1a1a" stroke="#1a1a1a" stroke-width="0.1">Set asciugamani puliti: viso (1 a pers.) + corpo (1 a pers.) + telo</text>
<text transform="translate(865.8,535.4) rotate(0.03)" font-size="2.55" fill="#1a1a1a" stroke="#1a1a1a" stroke-width="0.1">bagno (1 a pers.)</text>
<rect x="864.2" y="537.18" width="119.8" height="5.27" fill="#f5f5f5"/>
<rect x="864.2" y="542.2" width="119.8" height="0.5" fill="#e0e0e0"/>
<rect x="941.25" y="537.18" width="0.5" height="5.27" fill="#e4e4e4"/>
<text transform="translate(865.8,540.73) rotate(0.03)" font-size="2.55" fill="#1a1a1a" stroke="#1a1a1a" stroke-width="0.1">Asciugamani ripiegati in modo decorativo</text>
<rect x="864.2" y="550.2" width="119.8" height="0.5" fill="#e0e0e0"/>
<rect x="941.25" y="542.45" width="0.5" height="8" fill="#e4e4e4"/>
<text transform="translate(865.8,546.07) rotate(0.03)" font-size="2.55" fill="#1a1a1a" stroke="#1a1a1a" stroke-width="0.1">Carta igienica: almeno 2 rotoli per bagno (1 montato + 1 di</text>
<text transform="translate(865.8,548.67) rotate(0.03)" font-size="2.55" fill="#1a1a1a" stroke="#1a1a1a" stroke-width="0.1">riserva)</text>
<rect x="864.2" y="550.45" width="119.8" height="5.27" fill="#f5f5f5"/>
<rect x="864.2" y="555.47" width="119.8" height="0.5" fill="#e0e0e0"/>
<rect x="941.25" y="550.45" width="0.5" height="5.27" fill="#e4e4e4"/>
<text transform="translate(865.8,554) rotate(0.03)" font-size="2.55" fill="#1a1a1a" stroke="#1a1a1a" stroke-width="0.1">Consumabili: sapone liquido, shampoo, gel doccia riforniti</text>
<rect x="864.2" y="560.74" width="119.8" height="0.5" fill="#e0e0e0"/>
<rect x="941.25" y="555.72" width="0.5" height="5.27" fill="#e4e4e4"/>
<text transform="translate(865.8,559.27) rotate(0.03)" font-size="2.55" fill="#1a1a1a" stroke="#1a1a1a" stroke-width="0.1">Pavimento: lavato e asciugato</text>
</g>
<g id="doc1">
<rect x="593" y="313.2" width="169.6" height="230.1" fill="#fff"/>
<clipPath id="c12"><rect x="593" y="313.2" width="169.6" height="230.1"/></clipPath><g clip-path="url(#c12)">
<text transform="translate(596.1,321.38) rotate(0.03)" font-size="5.5" font-weight="bold" fill="#1c3a6e">Modalità di check-in</text>
<text transform="translate(596.1,330.52) rotate(0.03)" font-size="4.5" font-weight="bold" fill="#1f4a9c" stroke="#1f4a9c" stroke-width="0.1">A — Self check-in (consigliato)</text>
<text transform="translate(596.1,336.89) rotate(0.03)" font-size="3.85" fill="#111" stroke="#111" stroke-width="0.1">Procedura standard per la maggior parte degli arrivi. Riduce i costi operativi e aumenta la</text>
<text transform="translate(596.1,341.39) rotate(0.03)" font-size="3.85" fill="#111" stroke="#111" stroke-width="0.1">flessibilità di arrivo per l'ospite.</text>
<text transform="translate(596.1,354.92) rotate(0.03)" font-size="3.95" fill="#111" stroke="#111" stroke-width="0.1">48 ore prima dell'arrivo</text>
<rect x="596.2" y="356.6" width="162.2" height="6.8" fill="#eef3fb" stroke="#c3d3ec" stroke-width="0.6"/>
<text transform="translate(598.7,361.3) rotate(0.03)" font-size="3.6" fill="#222" stroke="#222" stroke-width="0.1"><tspan font-weight="bold" fill="#1c3a6e">NOTA:</tspan> Inviare automaticamente via Airbnb/Booking o manualmente se prenotazione diretta.</text>
<text transform="translate(596.1,373.12) rotate(0.03)" font-size="3.95" fill="#111" stroke="#111" stroke-width="0.1">Messaggio da inviare all'ospite — includere:</text>
<text transform="translate(603.2,379.3) rotate(0.03)" font-size="3.6" fill="#111" stroke="#111" stroke-width="0.1">•</text>
<text transform="translate(608.2,379.39) rotate(0.03)" font-size="3.85" fill="#111" stroke="#111" stroke-width="0.1">Codice accesso (cassetta chiavi o smart lock)</text>
<text transform="translate(603.2,384.75) rotate(0.03)" font-size="3.6" fill="#111" stroke="#111" stroke-width="0.1">•</text>
<text transform="translate(608.2,384.84) rotate(0.03)" font-size="3.85" fill="#111" stroke="#111" stroke-width="0.1">Indirizzo preciso con link Google Maps</text>
<text transform="translate(603.2,390.2) rotate(0.03)" font-size="3.6" fill="#111" stroke="#111" stroke-width="0.1">•</text>
<text transform="translate(608.2,390.29) rotate(0.03)" font-size="3.85" fill="#111" stroke="#111" stroke-width="0.1">Orario di check-in (standard: dalle 15:00)</text>
<text transform="translate(603.2,395.65) rotate(0.03)" font-size="3.6" fill="#111" stroke="#111" stroke-width="0.1">•</text>
<text transform="translate(608.2,395.74) rotate(0.03)" font-size="3.85" fill="#111" stroke="#111" stroke-width="0.1">Contatto WhatsApp di riferimento per urgenze</text>
<text transform="translate(603.2,401.1) rotate(0.03)" font-size="3.6" fill="#111" stroke="#111" stroke-width="0.1">•</text>
<text transform="translate(608.2,401.19) rotate(0.03)" font-size="3.85" fill="#111" stroke="#111" stroke-width="0.1">Link al Welcome Book digitale</text>
<text transform="translate(596.1,413.72) rotate(0.03)" font-size="3.95" fill="#111" stroke="#111" stroke-width="0.1">Giorno dell'arrivo — checklist proprietà</text>
<rect x="596" y="415.7" width="162.2" height="6.7" fill="#1c3a6e"/>
<text transform="translate(598.2,420.29) rotate(0.03)" font-size="3.45" font-weight="bold" fill="#fff">Attività</text>
<text transform="translate(702.2,420.29) rotate(0.03)" font-size="3.45" font-weight="bold" fill="#fff">Verifica / Note</text>
<rect x="596" y="429.32" width="162.2" height="0.5" fill="#e0e0e0"/>
<rect x="699.75" y="422.4" width="0.5" height="7.17" fill="#e4e4e4"/>
<text transform="translate(598.2,427.23) rotate(0.03)" font-size="3.45" fill="#1a1a1a" stroke="#1a1a1a" stroke-width="0.1">Proprietà pulita e pronta secondo SOP pulizie (RM-SOP-02)</text>
<rect x="596" y="429.57" width="162.2" height="7.17" fill="#f5f5f5"/>
<rect x="596" y="436.49" width="162.2" height="0.5" fill="#e0e0e0"/>
<rect x="699.75" y="429.57" width="0.5" height="7.17" fill="#e4e4e4"/>
<text transform="translate(598.2,434.4) rotate(0.03)" font-size="3.45" fill="#1a1a1a" stroke="#1a1a1a" stroke-width="0.1">Biancheria fresca su tutti i letti</text>
<rect x="596" y="443.66" width="162.2" height="0.5" fill="#e0e0e0"/>
<rect x="699.75" y="436.74" width="0.5" height="7.17" fill="#e4e4e4"/>
<text transform="translate(598.2,441.57) rotate(0.03)" font-size="3.45" fill="#1a1a1a" stroke="#1a1a1a" stroke-width="0.1">Asciugamani ripiegati in bagno (1 set a persona + 1 extra)</text>
<rect x="596" y="443.91" width="162.2" height="10.75" fill="#f5f5f5"/>
<rect x="596" y="454.41" width="162.2" height="0.5" fill="#e0e0e0"/>
<rect x="699.75" y="443.91" width="0.5" height="10.75" fill="#e4e4e4"/>
<text transform="translate(598.2,448.63) rotate(0.03)" font-size="3.45" fill="#1a1a1a" stroke="#1a1a1a" stroke-width="0.1">Consumabili riforniti (sapone, shampoo, gel doccia, carta</text>
<text transform="translate(598.2,452.43) rotate(0.03)" font-size="3.45" fill="#1a1a1a" stroke="#1a1a1a" stroke-width="0.1">igienica e rotoli/spugna)</text>
<rect x="596" y="461.58" width="162.2" height="0.5" fill="#e0e0e0"/>
<rect x="699.75" y="454.66" width="0.5" height="7.17" fill="#e4e4e4"/>
<text transform="translate(598.2,459.49) rotate(0.03)" font-size="3.45" fill="#1a1a1a" stroke="#1a1a1a" stroke-width="0.1">Acqua di benvenuto (1 bottiglia per coppia min.)</text>
<rect x="596" y="461.83" width="162.2" height="7.17" fill="#f5f5f5"/>
<rect x="596" y="468.75" width="162.2" height="0.5" fill="#e0e0e0"/>
<rect x="699.75" y="461.83" width="0.5" height="7.17" fill="#e4e4e4"/>
<text transform="translate(598.2,466.66) rotate(0.03)" font-size="3.45" fill="#1a1a1a" stroke="#1a1a1a" stroke-width="0.1">Wi-Fi funzionante — test da smartphone</text>
<rect x="596" y="475.92" width="162.2" height="0.5" fill="#e0e0e0"/>
<rect x="699.75" y="469" width="0.5" height="7.17" fill="#e4e4e4"/>
<text transform="translate(598.2,473.83) rotate(0.03)" font-size="3.45" fill="#1a1a1a" stroke="#1a1a1a" stroke-width="0.1">Climatizzazione/riscaldamento impostato a 22 gradi</text>
<rect x="596" y="476.17" width="162.2" height="7.17" fill="#f5f5f5"/>
<rect x="596" y="483.09" width="162.2" height="0.5" fill="#e0e0e0"/>
<rect x="699.75" y="476.17" width="0.5" height="7.17" fill="#e4e4e4"/>
<text transform="translate(598.2,481) rotate(0.03)" font-size="3.45" fill="#1a1a1a" stroke="#1a1a1a" stroke-width="0.1">Luci funzionanti in tutti gli ambienti</text>
<rect x="596" y="490.26" width="162.2" height="0.5" fill="#e0e0e0"/>
<rect x="699.75" y="483.34" width="0.5" height="7.17" fill="#e4e4e4"/>
<text transform="translate(598.2,488.17) rotate(0.03)" font-size="3.45" fill="#1a1a1a" stroke="#1a1a1a" stroke-width="0.1">Cassetta chiavi/smartlock verificata con codice corretto</text>
<rect x="596" y="490.51" width="162.2" height="7.17" fill="#f5f5f5"/>
<rect x="596" y="497.43" width="162.2" height="0.5" fill="#e0e0e0"/>
<rect x="699.75" y="490.51" width="0.5" height="7.17" fill="#e4e4e4"/>
<text transform="translate(598.2,495.34) rotate(0.03)" font-size="3.45" fill="#1a1a1a" stroke="#1a1a1a" stroke-width="0.1">Welcome kit e istruzioni appliance in bella vista</text>
<text transform="translate(596.1,516.82) rotate(0.03)" font-size="4.5" font-weight="bold" fill="#1f4a9c" stroke="#1f4a9c" stroke-width="0.1">B — Accoglienza diretta</text>
<text transform="translate(596.1,523.79) rotate(0.03)" font-size="3.85" fill="#111" stroke="#111" stroke-width="0.1">Da attivare su richiesta esplicita dell'ospite o per soggiorni premium (villa). Prevede presenza fisica</text>
<text transform="translate(596.1,528.79) rotate(0.03)" font-size="3.85" fill="#111" stroke="#111" stroke-width="0.1">al momento dell'arrivo.</text>
<rect x="596" y="536.2" width="162.6" height="0.6" fill="#dcdcdc"/>
<text transform="translate(596.1,541.04) rotate(0.03)" font-size="2.9" fill="#999">R&amp;M Condotti Immobiliari • RM-SOP-01 • v1.0</text>
<text transform="translate(744.5,541.04) rotate(0.03)" font-size="2.9" fill="#999">Pag. <tspan font-weight="bold" fill="#333" font-size="3.6">2</tspan></text>
</g>
</g>
</svg></body></html>
